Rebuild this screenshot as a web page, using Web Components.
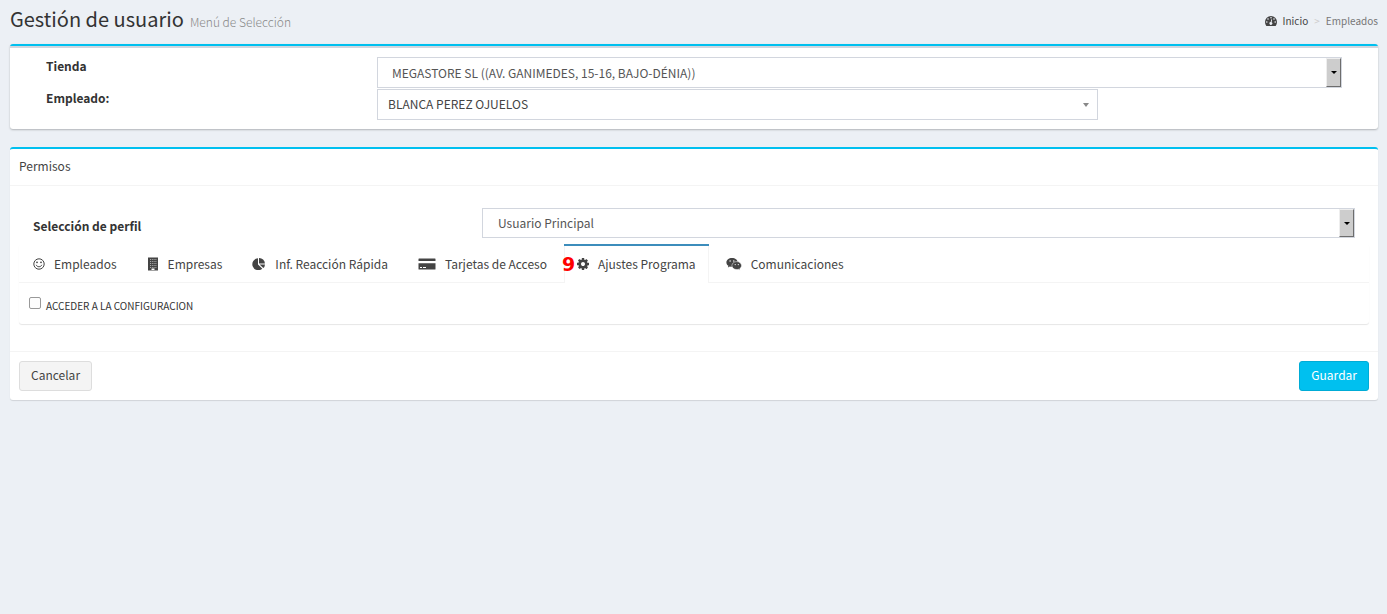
<!DOCTYPE html>
<html lang="es">
<head>
<meta charset="utf-8">
<meta name="viewport" content="width=device-width, initial-scale=1">
<title>Gestión de usuario</title>
<style>
body { margin: 0; background: #ecf0f5; color: #333; font: 12px/20px "Noto Sans CJK SC", "Noto Sans", sans-serif; }
</style>
</head>
<body>
<user-page></user-page>
<script>
const define = (name, html, setup) => {
  const template = document.createElement("template");
  template.innerHTML = html;
  customElements.define(name, class extends HTMLElement {
    connectedCallback() {
      if (this.shadowRoot) return;
      this.attachShadow({ mode: "open" }).append(template.content.cloneNode(true));
      if (setup) setup(this, this.shadowRoot);
    }
  });
};

const icons = {
  gauge: [12, 10, '<path d="M6 0a6 6 0 0 0-6 6c0 1.400.4 2.700 1.200 3.700.1.200.3.300.5.300h8.600c.2 0 .4-.1.500-.3C11.600 8.700 12 7.400 12 6a6 6 0 0 0-6-6z"/><g fill="#ecf0f5"><circle cx="6" cy="1.800" r=".8"/><circle cx="3" cy="3" r=".8"/><circle cx="1.800" cy="6" r=".8"/><circle cx="9" cy="3" r=".8"/><circle cx="10.200" cy="6" r=".8"/><path d="M6.300 3.300l.8.200-.5 2.800a1.400 1.400 0 1 1-.9-.2z"/></g>'],
  smile: [12, 12, '<circle cx="6" cy="6" r="5.200" fill="none" stroke="currentColor"/><circle cx="4" cy="4.300" r=".9"/><circle cx="8" cy="4.300" r=".9"/><path d="M3.300 7.200c.9 2.200 4.500 2.200 5.400 0" fill="none" stroke="currentColor" stroke-linecap="round"/>'],
  building: [12, 14, '<path fill-rule="evenodd" d="M1 .5h10v13H1zM4.500 11.500v1.500h3v-1.500z"/><path d="M3 2.500h6.500M3 4.500h6.500M3 6.500h6.500M3 8.500h6.500M3 10.500h6.500" stroke="#fff" stroke-width=".9" stroke-dasharray="1 .8" opacity=".6"/>'],
  pie: [14, 12, '<path d="M6 .2V6.400l4.300 4.300A6 6 0 1 1 6 .2z"/><path d="M7 0a5.800 5.800 0 0 1 5.900 5.600H7z"/><path d="M7.600 6.400H13a5.700 5.700 0 0 1-1.700 3.700z"/>'],
  card: [18, 12, '<path d="M1 .5h16q.5 0 .5.500v2H.5V1q0-.5.500-.5zM.5 5.200h17V11q0 .5-.5.500H1q-.5 0-.5-.5z"/><path d="M2 9.500h2M5 9.500h3" stroke="#fff"/>'],
  cog: [12, 12, '<path transform="scale(.0078125) translate(0 -128)" d="M1024 896q0-106-75-181t-181-75-181 75-75 181 75 181 181 75 181-75 75-181zm512-109v222q0 12-8 23t-20 13l-185 28q-19 54-39 91 35 50 107 138 10 12 10 25t-9 23q-27 37-99 108t-94 71q-12 0-26-9l-138-108q-44 23-91 38-16 136-29 186-7 28-36 28h-222q-14 0-24.500-8.500t-11.500-21.500l-28-184q-49-16-90-37l-141 107q-10 9-25 9-14 0-25-11-126-114-165-168-7-10-7-23 0-12 8-23 15-21 51-66.500t54-70.500q-27-50-41-99l-183-27q-13-2-21-12.500t-8-23.500v-222q0-12 8-23t19-13l186-28q14-46 39-92-40-57-107-138-10-12-10-24 0-10 9-23 26-36 98.500-107.500t94.500-71.500q13 0 26 10l138 107q44-23 91-38 16-136 29-186 7-28 36-28h222q14 0 24.500 8.500t11.500 21.500l28 184q49 16 90 37l142-107q9-9 24-9 13 0 25 10 129 119 165 170 7 8 7 22 0 12-8 23-15 21-51 66.500t-54 70.500q26 50 41 98l183 28q13 2 21 12.500t8 23.500z"/>'],
  chat: [16, 14, '<path d="M6 1C2.800 1 .4 3 .4 5.400c0 1.400.8 2.600 2 3.400l-.5 1.600 1.900-1q1 .3 2.200.3C9.200 9.700 11.600 8 11.600 5.400S9.200 1 6 1z"/><path d="M10.800 4.600c-2.800 0-4.900 1.800-4.900 4s2.100 4 4.900 4q.9 0 1.800-.3l1.500.9-.4-1.400c1.100-.8 1.800-1.900 1.800-3.200 0-2.200-2.100-4-4.700-4z" stroke="#fff" stroke-width=".5"/><g fill="#fff"><circle cx="4.100" cy="4" r=".7"/><circle cx="7.800" cy="4" r=".7"/><circle cx="9.200" cy="7.600" r=".6"/><circle cx="12.300" cy="7.600" r=".6"/></g>']
};

define("app-icon", `
<style>:host { display: inline-flex; flex: none; } svg { display: block; fill: currentColor; }</style>`,
(host, root) => {
  const [w, h, art] = icons[host.getAttribute("name")];
  const holder = document.createElement("template");
  holder.innerHTML = `<svg aria-hidden="true" width="${w}" height="${h}" viewBox="0 0 ${w} ${h}">${art}</svg>`;
  root.append(holder.content);
});

define("page-header", `
<style>
:host { display: flex; justify-content: space-between; align-items: center; padding: 3px 9px 9px 10px; }
h1 { display: flex; align-items: baseline; gap: 6px; margin: 0; font-size: 20px; line-height: 32px; font-weight: 400; }
small { font-size: 12px; line-height: 20px; font-weight: 300; color: #888; }
nav { display: flex; align-items: center; gap: 6px; font-size: 10px; color: #777; padding-top: 3px; }
a { display: flex; align-items: center; gap: 6px; color: #444; text-decoration: none; }
.sep { color: #ccc; }
</style>
<h1><span><slot></slot></span><small><slot name="subtitle"></slot></small></h1>
<nav aria-label="Ruta"><a href="#inicio"><app-icon name="gauge"></app-icon>Inicio</a><span class="sep">&gt;</span><span>Empleados</span></nav>`);

define("panel-box", `
<style>
:host { display: block; margin: 0 9px 18px 10px; background: #fff; border-top: 2px solid #00c0ef; border-radius: 3px; box-shadow: 0 1px 1px rgba(0,0,0,.12); }
:host([framed]) { box-shadow: 0 1px 2px rgba(0,0,0,.25); }
:host([framed]) .body { border-top: 2px solid #d2d6de; }
header { padding: 7px 9px 9px; border-bottom: 1px solid #f4f4f4; color: #444; }
footer { display: flex; justify-content: space-between; padding: 9px; border-top: 1px solid #f4f4f4; }
:host(:not([titled])) :is(header, footer) { display: none; }
</style>
<header><slot name="title"></slot></header>
<div class="body"><slot></slot></div>
<footer><slot name="footer"></slot></footer>`);

define("select-field", `
<style>
:host { display: grid; grid-template-columns: 331fr 721fr 244fr; }
:host([profile]) { grid-template-columns: 449fr 873fr; }
label { font-weight: 700; line-height: 18px; }
.control { position: relative; grid-column: 2 / -1; display: flex; }
:host([compact]) .control { grid-column: 2; }
:host([profile]) label { padding-top: 9px; }
select { appearance: none; flex: 1; min-width: 0; height: 31px; margin: 0; padding: 0 30px 0 14px; border: 1px solid #d2d6de; border-radius: 0; background: #fff; color: #555; font: inherit; }
:host([profile]) select { height: 30px; padding-left: 15px; }
:host([compact]) select { padding-left: 10px; padding-bottom: 2px; color: #444; }
.button { position: absolute; top: 1px; right: 1px; bottom: 1px; width: 15px; box-sizing: border-box; display: flex; align-items: center; justify-content: center; background: #cdcdcd; border: 1px solid; border-color: #eee #6d6d6d #6d6d6d #eee; pointer-events: none; }
.button::before { content: ""; border: 3px solid transparent; border-top-color: #000; border-bottom: 0; }
:host([compact]) .button { background: none; border: 0; right: 5px; }
:host([compact]) .button::before { border-top: 4px solid #888; }
</style>
<label for="field"></label>
<div class="control"><select id="field"><option></option></select><span class="button"></span></div>`,
(host, root) => {
  root.querySelector("label").textContent = host.getAttribute("label");
  root.querySelector("option").textContent = host.getAttribute("value");
});

define("tab-link", `
<style>
:host { display: block; }
a { position: relative; display: flex; align-items: center; gap: 9px; height: 36px; padding: 0 13px; color: #444; text-decoration: none; border-top: 2px solid transparent; white-space: nowrap; }
:host([active]) { margin-bottom: -1px; }
:host([active]) a { padding-bottom: 1px; background: #fff; border-top-color: #3c8dbc; box-shadow: inset 1px 0 #f4f4f4, inset -1px 0 #f4f4f4; }
.mark { position: absolute; left: -2px; top: 7px; font: 700 19px/22px "DejaVu Sans", sans-serif; color: #f00; }
</style>
<a><slot name="icon"></slot><slot></slot></a>`,
(host, root) => {
  const link = root.querySelector("a");
  link.href = "#" + host.getAttribute("target");
  if (host.hasAttribute("mark")) {
    const mark = document.createElement("span");
    mark.className = "mark";
    mark.textContent = host.getAttribute("mark");
    link.append(mark);
  }
});

define("tab-panel", `
<style>
:host { display: block; background: #fff; border-radius: 3px; box-shadow: 0 1px 1px rgba(0,0,0,.1); }
nav { display: flex; gap: 4px; padding-left: 1px; border-bottom: 1px solid #f4f4f4; }
.content { padding: 10px 10px 8px; }
</style>
<nav><slot name="tab"></slot></nav>
<div class="content"><slot></slot></div>`);

define("check-option", `
<style>
:host { display: flex; }
label { display: flex; align-items: flex-start; gap: 5px; font-size: 10px; }
input { appearance: none; width: 12px; height: 12px; margin: 4px 0 0; border: 1px solid #999; border-radius: 2px; background: #fdfdfd; box-sizing: border-box; }
input:checked { background: #3c8dbc; }
span { padding-top: 3px; line-height: 20px; }
</style>
<label><input type="checkbox"><span><slot></slot></span></label>`);

define("action-button", `
<style>
:host { display: block; }
button { height: 30px; padding: 0 11px 2px; border: 1px solid #ddd; border-radius: 3px; background: #f4f4f4; color: #444; font: inherit; }
:host([primary]) button { background: #00c0ef; border-color: #00acd6; color: #fff; }
</style>
<button type="button"><slot></slot></button>`);

define("user-page", `
<style>
:host { display: block; }
.filters { display: grid; gap: 1px; padding: 9px 36px; }
.profile { padding: 22px 23px 6px; }
.tabs { padding: 0 9px 27px; }
</style>
<page-header>Gestión de usuario<span slot="subtitle">Menú de Selección</span></page-header>
<main>
  <panel-box framed>
    <div class="filters">
      <select-field label="Tienda" value="MEGASTORE SL ((AV. GANIMEDES, 15-16, BAJO-DÉNIA))"></select-field>
      <select-field compact label="Empleado:" value="BLANCA PEREZ OJUELOS"></select-field>
    </div>
  </panel-box>
  <panel-box titled>
    <span slot="title">Permisos</span>
    <div class="profile"><select-field profile label="Selección de perfil" value="Usuario Principal"></select-field></div>
    <div class="tabs">
      <tab-panel>
        <tab-link slot="tab" target="empleados"><app-icon slot="icon" name="smile"></app-icon>Empleados</tab-link>
        <tab-link slot="tab" target="empresas"><app-icon slot="icon" name="building"></app-icon>Empresas</tab-link>
        <tab-link slot="tab" target="reaccion"><app-icon slot="icon" name="pie"></app-icon>Inf. Reacción Rápida</tab-link>
        <tab-link slot="tab" target="tarjetas"><app-icon slot="icon" name="card"></app-icon>Tarjetas de Acceso</tab-link>
        <tab-link slot="tab" target="ajustes" active mark="9"><app-icon slot="icon" name="cog"></app-icon>Ajustes Programa</tab-link>
        <tab-link slot="tab" target="comunicaciones"><app-icon slot="icon" name="chat"></app-icon>Comunicaciones</tab-link>
        <check-option>ACCEDER A LA CONFIGURACION</check-option>
      </tab-panel>
    </div>
    <action-button slot="footer">Cancelar</action-button>
    <action-button slot="footer" primary>Guardar</action-button>
  </panel-box>
</main>`);
</script>
</body>
</html>
